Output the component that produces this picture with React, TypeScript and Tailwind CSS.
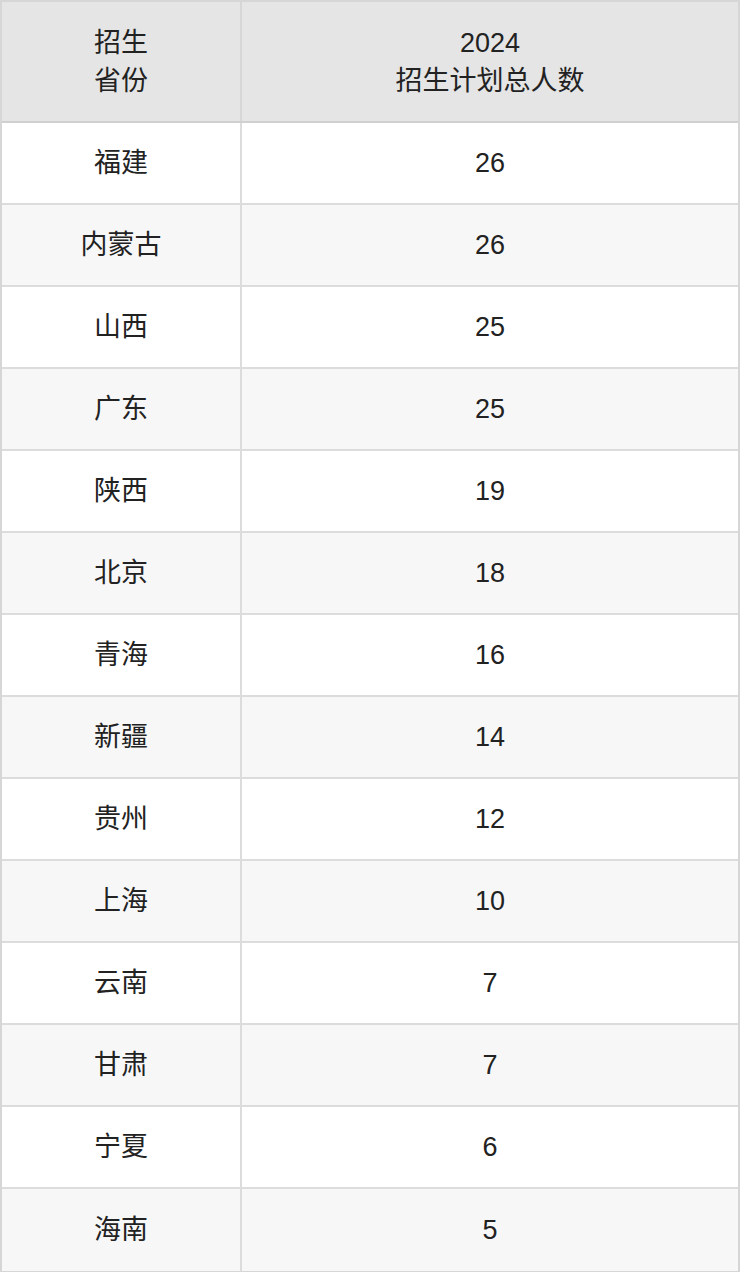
const rows: [string, string][] = [
  ["福建", "26"],
  ["内蒙古", "26"],
  ["山西", "25"],
  ["广东", "25"],
  ["陕西", "19"],
  ["北京", "18"],
  ["青海", "16"],
  ["新疆", "14"],
  ["贵州", "12"],
  ["上海", "10"],
  ["云南", "7"],
  ["甘肃", "7"],
  ["宁夏", "6"],
  ["海南", "5"],
];

export default function App() {
  return (
    <div
      className="w-[740px] bg-white text-[27px] text-[#222]"
      style={{ fontFamily: '"Liberation Sans", "Noto Sans CJK SC", sans-serif' }}
    >
      <div className="border-2 border-[#d6d6d6]">
        {/* header */}
        <div className="flex h-[121px] border-b-2 border-[#d0d0d0] bg-[#e5e5e5] leading-[38px]">
          <div className="flex w-[240px] shrink-0 flex-col items-center justify-center border-r-2 border-[#d6d6d6]">
            <span>招生</span>
            <span>省份</span>
          </div>
          <div className="flex flex-1 flex-col items-center justify-center">
            <span>2024</span>
            <span>招生计划总人数</span>
          </div>
        </div>
        {rows.map(([prov, n], i) => (
          <div
            key={prov}
            className={`flex h-[82px] ${i < rows.length - 1 ? "border-b-2" : ""} border-[#dcdcdc] ${
              i % 2 === 1 ? "bg-[#f7f7f7]" : "bg-white"
            }`}
          >
            <div className="flex w-[240px] shrink-0 items-center justify-center border-r-2 border-[#dcdcdc] pt-px">
              {prov}
            </div>
            <div className="flex flex-1 items-center justify-center pt-px">{n}</div>
          </div>
        ))}
      </div>
    </div>
  );
}
